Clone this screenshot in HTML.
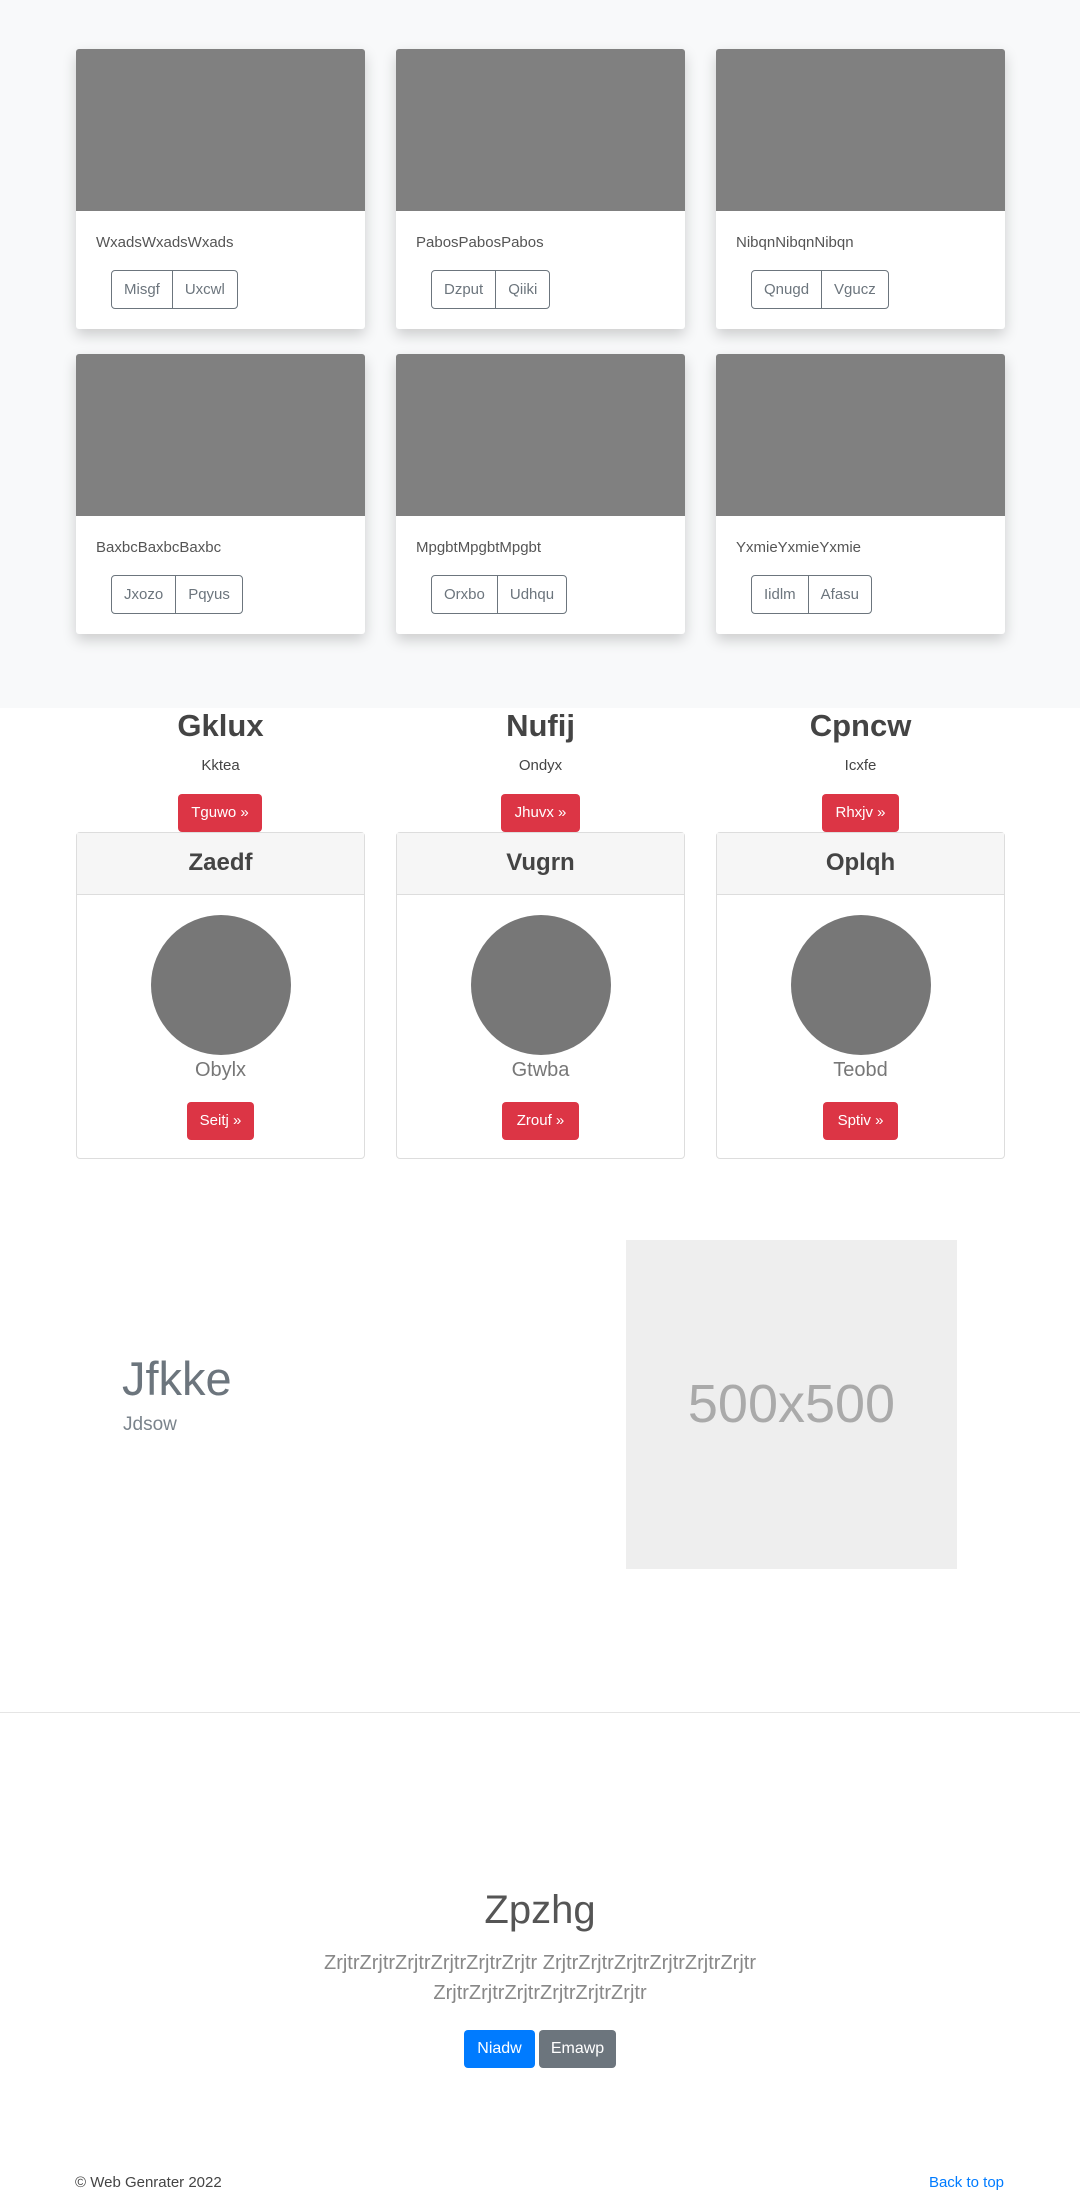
<!DOCTYPE html>
<html><head><meta charset="utf-8"><style>
*{box-sizing:border-box;margin:0;padding:0}
body{width:1080px;height:2196px;position:relative;background:#fff;font-family:"Liberation Sans",sans-serif;color:#444;overflow:hidden}
.a{position:absolute}
.top{left:0;top:0;width:1080px;height:708px;background:#f8f9fa}
.card{position:absolute;width:289px;height:280px;background:#fff;border-radius:3px;box-shadow:0 6px 14px rgba(0,0,0,.18);overflow:hidden}
.card .img{height:162px;background:#808080}
.card .t{position:absolute;left:20px;top:185px;font-size:15px;color:#555}
.grp{position:absolute;left:35px;top:221px;height:39px;display:flex;border:1px solid #6c757d;border-radius:4px}
.grp span{font-size:15px;color:#6c757d;line-height:37px;padding:0 12px}
.grp span+span{border-left:1px solid #6c757d}
.h{width:289px;text-align:center}
.red{position:absolute;background:#dc3545;color:#fff;font-size:15px;border-radius:4px;height:38px;line-height:38px;text-align:center}
.pc{position:absolute;top:832px;width:289px;height:327px;border:1px solid #ddd;border-radius:4px}
.pc .hd{height:62px;background:#f6f6f6;border-bottom:1px solid #ddd;text-align:center;font-size:24px;font-weight:bold;line-height:60px;color:#444}
.pc .c{position:absolute;left:74px;top:82px;width:140px;height:140px;border-radius:50%;background:#777}
.pc .n{position:absolute;top:226px;width:100%;text-align:center;font-size:20px;color:#777;font-weight:300}
</style></head><body>
<div class="a top"></div>

<div class="card" style="left:76px;top:49px"><div class="img"></div><div class="t">WxadsWxadsWxads</div><div class="grp"><span>Misgf</span><span>Uxcwl</span></div></div>
<div class="card" style="left:396px;top:49px"><div class="img"></div><div class="t">PabosPabosPabos</div><div class="grp"><span>Dzput</span><span>Qiiki</span></div></div>
<div class="card" style="left:716px;top:49px"><div class="img"></div><div class="t">NibqnNibqnNibqn</div><div class="grp"><span>Qnugd</span><span>Vgucz</span></div></div>
<div class="card" style="left:76px;top:354px"><div class="img"></div><div class="t">BaxbcBaxbcBaxbc</div><div class="grp"><span>Jxozo</span><span>Pqyus</span></div></div>
<div class="card" style="left:396px;top:354px"><div class="img"></div><div class="t">MpgbtMpgbtMpgbt</div><div class="grp"><span>Orxbo</span><span>Udhqu</span></div></div>
<div class="card" style="left:716px;top:354px"><div class="img"></div><div class="t">YxmieYxmieYxmie</div><div class="grp"><span>Iidlm</span><span>Afasu</span></div></div>

<div class="a h" style="left:76px;top:708px;font-size:31px;font-weight:bold;color:#444">Gklux</div>
<div class="a h" style="left:396px;top:708px;font-size:31px;font-weight:bold;color:#444">Nufij</div>
<div class="a h" style="left:716px;top:708px;font-size:31px;font-weight:bold;color:#444">Cpncw</div>
<div class="a h" style="left:76px;top:757px;font-size:15px">Kktea</div>
<div class="a h" style="left:396px;top:757px;font-size:15px">Ondyx</div>
<div class="a h" style="left:716px;top:757px;font-size:15px">Icxfe</div>
<div class="red" style="left:178px;top:794px;width:84px">Tguwo »</div>
<div class="red" style="left:501px;top:794px;width:79px">Jhuvx »</div>
<div class="red" style="left:822px;top:794px;width:77px">Rhxjv »</div>

<div class="pc" style="left:76px"><div class="hd">Zaedf</div><div class="c"></div><div class="n">Obylx</div><div class="red" style="left:110px;top:269px;width:67px">Seitj »</div></div>
<div class="pc" style="left:396px"><div class="hd">Vugrn</div><div class="c"></div><div class="n">Gtwba</div><div class="red" style="left:105px;top:269px;width:77px">Zrouf »</div></div>
<div class="pc" style="left:716px"><div class="hd">Oplqh</div><div class="c"></div><div class="n">Teobd</div><div class="red" style="left:106px;top:269px;width:75px">Sptiv »</div></div>

<div class="a" style="left:122px;top:1351px;font-size:47px;color:#6c757d">Jfkke</div>
<div class="a" style="left:123px;top:1414px;font-size:19px;color:#7a838b;font-weight:300">Jdsow</div>
<div class="a" style="left:626px;top:1240px;width:331px;height:329px;background:#eee;color:#aaa;font-size:54px;text-align:center;line-height:329px">500x500</div>

<div class="a" style="left:0;top:1712px;width:1080px;height:1px;background:#e5e5e5"></div>

<div class="a" style="left:0;top:1888px;width:1080px;text-align:center;font-size:40px;color:#555;font-weight:300">Zpzhg</div>
<div class="a" style="left:300px;top:1948px;width:480px;text-align:center;font-size:20px;line-height:30px;color:#888">ZrjtrZrjtrZrjtrZrjtrZrjtrZrjtr ZrjtrZrjtrZrjtrZrjtrZrjtrZrjtr ZrjtrZrjtrZrjtrZrjtrZrjtrZrjtr</div>
<div class="a" style="left:464px;top:2030px;width:71px;height:38px;background:#007bff;color:#fff;border-radius:4px;font-size:16px;line-height:38px;text-align:center">Niadw</div>
<div class="a" style="left:539px;top:2030px;width:77px;height:38px;background:#6c757d;color:#fff;border-radius:4px;font-size:16px;line-height:38px;text-align:center">Emawp</div>

<div class="a" style="left:75px;top:2174px;font-size:15px;color:#444">© Web Genrater 2022</div>
<div class="a" style="right:76px;top:2174px;font-size:15px;color:#007bff">Back to top</div>
</body></html>
